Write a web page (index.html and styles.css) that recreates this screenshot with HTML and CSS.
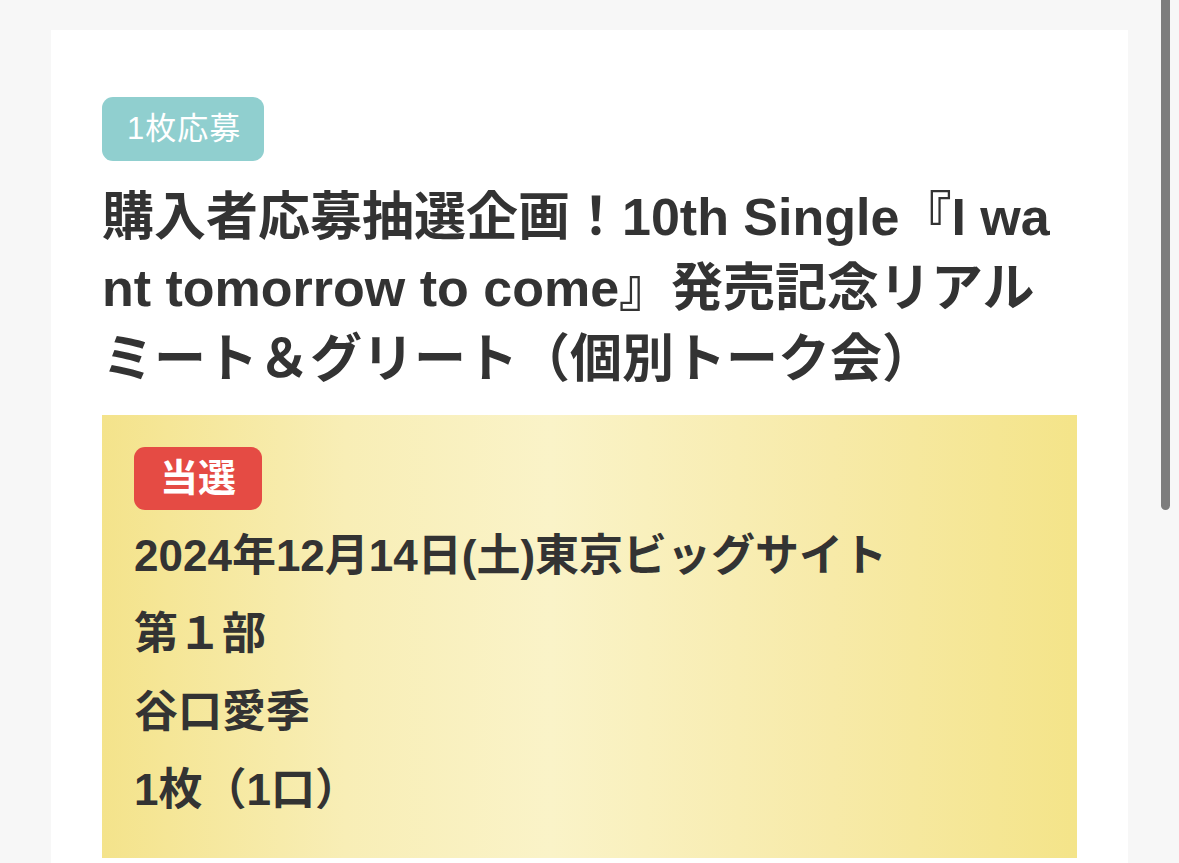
FILE: index.html
```html
<!DOCTYPE html>
<html lang="ja">
<head>
<meta charset="utf-8">
<title>当選</title>
<link rel="stylesheet" href="styles.css">
</head>
<body>
<main class="card">
  <span class="tag">1枚応募</span>
  <h1 class="title">購入者応募抽選企画！10th Single『I want tomorrow to come』発売記念リアルミート＆グリート（個別トーク会）</h1>
  <section class="result">
    <span class="badge">当選</span>
    <p class="line">2024年12月14日(土)東京ビッグサイト</p>
    <p class="line">第１部</p>
    <p class="line">谷口愛季</p>
    <p class="line">1枚（1口）</p>
  </section>
</main>
<div class="scroll-thumb"></div>
</body>
</html>
```
FILE: styles.css
```css
html, body {
  margin: 0;
  padding: 0;
  background: #f7f7f7;
  height: 863px;
  overflow: hidden;
}
body {
  font-family: "Liberation Sans", "Noto Sans CJK JP", sans-serif;
  color: #333333;
  padding: 30px 51px 0;
}
.card {
  background: #ffffff;
  padding: 67px 51px 40px;
  display: flex;
  flex-direction: column;
  align-items: flex-start;
}
.tag {
  background: #90cfcf;
  color: #ffffff;
  font-size: 31px;
  letter-spacing: 1px;
  line-height: 64px;
  height: 64px;
  padding: 0 23px 0 25px;
  border-radius: 11px;
}
.title {
  margin: 21px 0 20px;
  font-size: 52px;
  line-height: 71px;
  letter-spacing: 0;
  font-weight: 700;
  word-break: break-all;
  width: 100%;
}
.result {
  align-self: stretch;
  background: linear-gradient(90deg, #f4e38b 0%, #f8eeb6 25%, #faf3c8 46%, #f7eaa8 75%, #f4e489 100%);
  padding: 32px 32px 29px;
  display: flex;
  flex-direction: column;
  align-items: flex-start;
}
.badge {
  background: #e54b44;
  color: #ffffff;
  font-weight: 700;
  font-size: 38px;
  height: 63px;
  line-height: 63px;
  padding: 0 26px;
  border-radius: 11px;
  margin-bottom: 7px;
}
.line {
  margin: 0;
  font-size: 44px;
  line-height: 78px;
  font-weight: 700;
}
.scroll-thumb {
  position: fixed;
  top: -10px;
  right: 9px;
  width: 9px;
  height: 520px;
  border-radius: 5px;
  background: #7d7d7d;
}
```
